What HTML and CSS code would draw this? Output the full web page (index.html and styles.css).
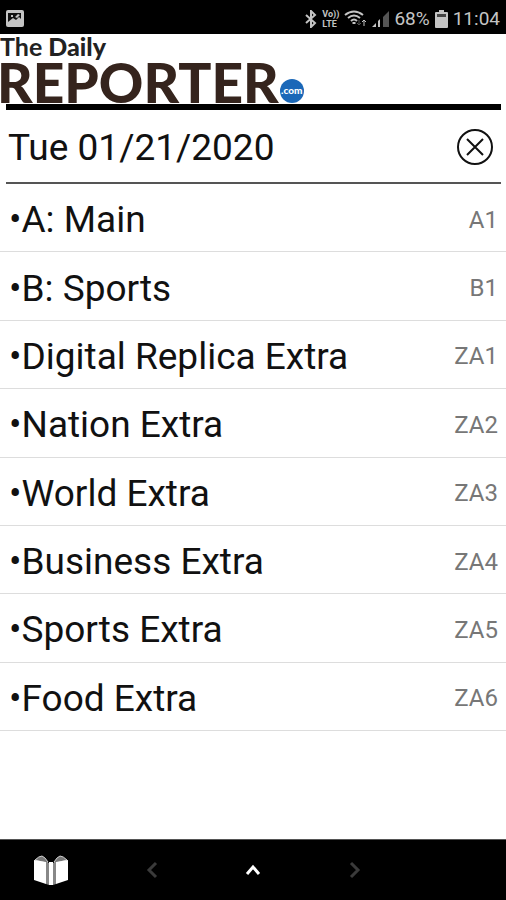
FILE: index.html
```html
<!DOCTYPE html>
<html lang="en">
<head>
  <meta charset="UTF-8">
  <meta name="viewport" content="width=device-width, initial-scale=1">
  <title>The Daily Reporter</title>
  <link rel="stylesheet" href="styles.css">
</head>
<body>
  <div class="status">
    <svg class="status-picture" width="18" height="17" viewBox="0 0 18 17">
      <rect x="0" y="0" width="18" height="17" rx="2" fill="#c4c4c4"/>
      <path d="M2 3h13v6l-2-2-3 3-3-2-5 4z" fill="#111"/>
      <path d="M5 5h2v2H5zM9 7l3-3 2 1-3 3z" fill="#c4c4c4"/>
    </svg>
    <div class="status-right">
      <svg width="12" height="18" viewBox="0 0 12 18" fill="none" stroke="#c4c4c4" stroke-width="2">
        <path d="M1 5l9 8-4 4V1l4 4-9 8"/>
      </svg>
      <span class="volte">Vo))<br>LTE</span>
      <svg class="wifi" width="23" height="17" viewBox="0 0 23 17" fill="none" stroke="#c4c4c4" stroke-width="2">
        <path d="M1 5q9-7 18 0M4 8q6-5 12 0M7 11q3-3 6 0"/>
        <path d="M10 12v2" stroke-width="3"/>
        <path d="M15 10v5M13 13l2 2 2-2" stroke="#555" stroke-width="1"/>
        <path d="M20 16v-5M18 12l2-2 2 2" stroke-width="1"/>
      </svg>
      <svg width="17" height="18" viewBox="0 0 17 18">
        <path d="M17 1v16h-6V7z" fill="#555"/>
        <path d="M0 17l4-4v4zM6 11l2-2v8H6z" fill="#c4c4c4"/>
      </svg>
      <span class="battery-text">68%</span>
      <svg class="battery" width="13" height="18" viewBox="0 0 13 18">
        <path d="M4 0h5v2h3q1 0 1 1v14q0 1-1 1H1q-1 0-1-1V3q0-1 1-1h3z" fill="#c4c4c4"/>
        <path d="M2 4h9v3H2z" fill="#444"/>
      </svg>
      <span>11:04</span>
    </div>
  </div>

  <header>
    <h1 class="logo">
      <span class="logo-top">The <b>Daily</b></span>
      <span class="logo-name">REPORTER<span class="dot-com">.com</span></span>
    </h1>
    <div class="date-bar">
      <h2>Tue 01/21/2020</h2>
      <button type="button" class="close" aria-label="Close">
        <svg width="36" height="36" viewBox="0 0 36 36" fill="none" stroke="#111" stroke-width="2">
          <circle cx="18" cy="18" r="17"/>
          <path d="M10 10l16 16M26 10L10 26"/>
        </svg>
      </button>
    </div>
  </header>

  <ul class="sections">
    <li><a href="#"><span>•A: Main</span><span class="page">A1</span></a></li>
    <li><a href="#"><span>•B: Sports</span><span class="page">B1</span></a></li>
    <li><a href="#"><span>•Digital Replica Extra</span><span class="page">ZA1</span></a></li>
    <li><a href="#"><span>•Nation Extra</span><span class="page">ZA2</span></a></li>
    <li><a href="#"><span>•World Extra</span><span class="page">ZA3</span></a></li>
    <li><a href="#"><span>•Business Extra</span><span class="page">ZA4</span></a></li>
    <li><a href="#"><span>•Sports Extra</span><span class="page">ZA5</span></a></li>
    <li><a href="#"><span>•Food Extra</span><span class="page">ZA6</span></a></li>
  </ul>

  <nav class="toolbar">
    <button type="button" aria-label="Editions">
      <svg width="36" height="32" viewBox="0 0 36 32">
        <path d="M2 6q4-4 7-4 3 1 6 6L13 9zM34 6q-4-4-7-4-3 1-6 6l2 1z" fill="#777" stroke="#ccc"/>
        <path d="M1 6l12 2v22L1 26zM35 6L23 8v22l12-4z" fill="#fff"/>
        <path d="M13 8l3 1v22l-3-1zM23 8l-3 1v22l3-1z" fill="#888"/>
        <path d="M16 8h4v23h-4z" fill="#fff"/>
      </svg>
    </button>
    <button type="button" aria-label="Previous page">
      <svg width="16" height="20" viewBox="0 0 16 20" fill="none" stroke="#3a3a3a" stroke-width="3">
        <path d="M12 3L5 10l7 7"/>
      </svg>
    </button>
    <button type="button" aria-label="Show pages">
      <svg width="20" height="20" viewBox="0 0 20 20" fill="none" stroke="#fff" stroke-width="3">
        <path d="M4 14l6-7 6 7"/>
      </svg>
    </button>
    <button type="button" aria-label="Next page">
      <svg width="16" height="20" viewBox="0 0 16 20" fill="none" stroke="#3a3a3a" stroke-width="3">
        <path d="M5 3l7 7-7 7"/>
      </svg>
    </button>
    <span></span>
  </nav>
</body>
</html>
```

FILE: styles.css
```css
* {
  margin: 0;
  padding: 0;
  box-sizing: border-box;
}
body {
  min-height: 100vh;
  display: flex;
  flex-direction: column;
  background: #fff;
  color: #111;
  font-family: Roboto, sans-serif;
}
button {
  border: none;
  background: none;
  cursor: pointer;
}
svg {
  display: block;
}

/* Status bar */
.status {
  height: 34px;
  padding: 3px 6px 0;
  display: flex;
  align-items: center;
  justify-content: space-between;
  background: #000;
  color: #c4c4c4;
  font-size: 19px;
}
.status-right {
  display: flex;
  align-items: center;
  gap: 5px;
}
.volte {
  font-size: 9px;
  font-weight: bold;
  line-height: 10px;
}

/* Logo and date */
header {
  padding: 0 5px 0 6px;
}
.logo {
  height: 77px;
  margin-left: -9px;
  display: flex;
  flex-direction: column;
  font-family: Lato, sans-serif;
  font-weight: 900;
}
.logo-top {
  padding-left: 3px;
  font-size: 25px;
  line-height: 25px;
  font-weight: bold;
  color: #222;
}
.logo-name {
  display: flex;
  align-items: flex-end;
  font-size: 55px;
  line-height: 46px;
  color: #35241d;
}
.dot-com {
  width: 24px;
  height: 24px;
  margin: 0 0 2px 1px;
  border-radius: 50%;
  background: #1b68b8;
  color: #fff;
  font-size: 10px;
  line-height: 23px;
  text-align: center;
}
.date-bar {
  height: 80px;
  margin-top: -7px;
  padding: 2px 8px 0 2px;
  display: flex;
  align-items: center;
  justify-content: space-between;
  border-top: 6px solid #000;
  border-bottom: 2px solid #555;
}
.date-bar h2 {
  font-size: 37px;
  font-weight: normal;
}

/* Section list */
.sections {
  flex: 1;
  margin-bottom: 12vh;
  display: flex;
  flex-direction: column;
  list-style: none;
}
.sections li {
  flex: 1;
  display: flex;
  border-bottom: 1px solid #ddd;
}
.sections a {
  flex: 1;
  padding: 4px 8px 0 9px;
  display: flex;
  align-items: center;
  justify-content: space-between;
  color: #111;
  font-size: 37px;
  text-decoration: none;
}
.sections .page {
  color: #777;
  font-size: 24px;
}

/* Bottom toolbar */
.toolbar {
  height: 61px;
  display: flex;
  background: #000;
  border-top: 1px solid #555;
}
.toolbar button,
.toolbar span {
  flex: 1;
  display: flex;
  align-items: center;
  justify-content: center;
}
```
